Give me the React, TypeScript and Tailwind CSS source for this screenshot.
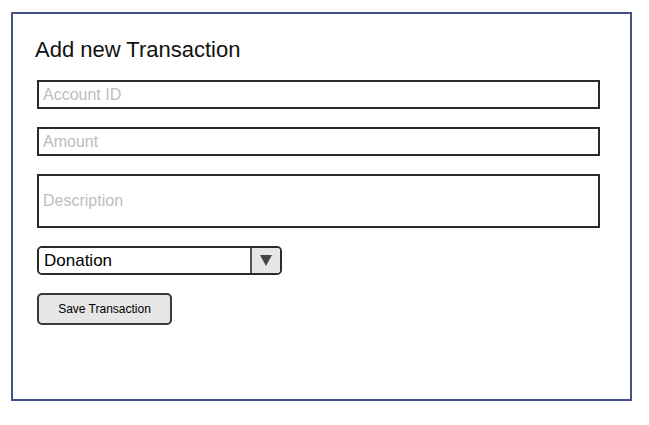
export default function App() {
  const inputCls =
    'block w-[563px] h-[29px] border-2 border-[#2a2a2a] bg-white px-[4px] text-[16px] text-black placeholder:text-[#bdbdbd] outline-none';

  return (
    <div className="w-[649px] h-[425px] bg-white pl-[11px] pt-[12px]" style={{ fontFamily: '"Liberation Sans", Arial, sans-serif' }}>
      <div className="w-[621px] h-[389px] border-2 border-[#44508e] pl-[24px] pt-[22px]">
        <h1 className="ml-[-2px] text-[22px] leading-[28px] text-[#111]">Add new Transaction</h1>
        <div className="mt-[16px] flex flex-col">
          <input className={inputCls} placeholder="Account ID" />
          <input className={`${inputCls} mt-[18px]`} placeholder="Amount" />
          <textarea
            className="mt-[18px] block w-[563px] h-[54px] resize-none border-2 border-[#2a2a2a] bg-white px-[4px] pt-[15px] text-[16px] leading-[20px] text-black placeholder:text-[#bdbdbd] outline-none"
            placeholder="Description"
          />
          <div className="mt-[18px] flex w-[245px] h-[29px] rounded-[5px] border-2 border-[#2a2a2a] overflow-hidden">
            <div className="flex-1 flex items-center px-[5px] text-[17px] text-black bg-white">Donation</div>
            <div className="w-[30px] flex items-center justify-center border-l-2 border-[#555] bg-[#e6e6e6]">
              <svg width="12" height="11" viewBox="0 0 12 11">
                <polygon points="0,0 12,0 6,11" fill="#444" />
              </svg>
            </div>
          </div>
          <button className="mt-[18px] w-[135px] h-[32px] rounded-[5px] border-2 border-[#3a3a3a] bg-[#e6e6e6] text-[12px] text-black">
            Save Transaction
          </button>
        </div>
      </div>
    </div>
  );
}
